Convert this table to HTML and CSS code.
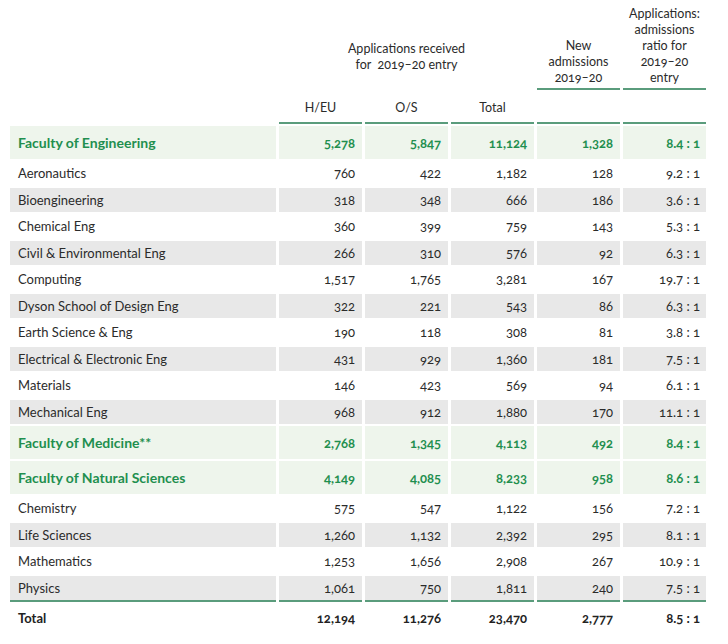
FILE: index.html
```html
<!DOCTYPE html>
<html>
<head>
<meta charset="utf-8">
<link rel="stylesheet" href="styles.css">
</head>
<body>
<div class="wrap">
<table class="stats">
  <colgroup>
    <col class="c-label"><col class="c-num"><col class="c-num"><col class="c-num"><col class="c-num"><col class="c-num">
  </colgroup>
  <thead>
    <tr class="h1">
      <th></th>
      <th colspan="3" class="grp"><span class="grp-text">Applications received<br>for&nbsp; 2019–20 entry</span></th>
      <th class="line">New<br>admissions<br>2019–20</th>
      <th class="line">Applications:<br>admissions<br>ratio for<br>2019–20<br>entry</th>
    </tr>
    <tr class="h2">
      <th></th>
      <th class="line">H/EU</th>
      <th class="line">O/S</th>
      <th class="line">Total</th>
      <th class="line"></th>
      <th class="line"></th>
    </tr>
  </thead>
  <tbody>
    <tr class="fac"><td>Faculty of Engineering</td><td>5,278</td><td>5,847</td><td>11,124</td><td>1,328</td><td class="ratio">8.4 : 1</td></tr>
    <tr><td>Aeronautics</td><td>760</td><td>422</td><td>1,182</td><td>128</td><td class="ratio">9.2 : 1</td></tr>
    <tr class="alt"><td>Bioengineering</td><td>318</td><td>348</td><td>666</td><td>186</td><td class="ratio">3.6 : 1</td></tr>
    <tr><td>Chemical Eng</td><td>360</td><td>399</td><td>759</td><td>143</td><td class="ratio">5.3 : 1</td></tr>
    <tr class="alt"><td>Civil &amp; Environmental Eng</td><td>266</td><td>310</td><td>576</td><td>92</td><td class="ratio">6.3 : 1</td></tr>
    <tr><td>Computing</td><td>1,517</td><td>1,765</td><td>3,281</td><td>167</td><td class="ratio">19.7 : 1</td></tr>
    <tr class="alt"><td>Dyson School of Design Eng</td><td>322</td><td>221</td><td>543</td><td>86</td><td class="ratio">6.3 : 1</td></tr>
    <tr><td>Earth Science &amp; Eng</td><td>190</td><td>118</td><td>308</td><td>81</td><td class="ratio">3.8 : 1</td></tr>
    <tr class="alt"><td>Electrical &amp; Electronic Eng</td><td>431</td><td>929</td><td>1,360</td><td>181</td><td class="ratio">7.5 : 1</td></tr>
    <tr><td>Materials</td><td>146</td><td>423</td><td>569</td><td>94</td><td class="ratio">6.1 : 1</td></tr>
    <tr class="alt"><td>Mechanical Eng</td><td>968</td><td>912</td><td>1,880</td><td>170</td><td class="ratio">11.1 : 1</td></tr>
    <tr class="fac"><td>Faculty of Medicine**</td><td>2,768</td><td>1,345</td><td>4,113</td><td>492</td><td class="ratio">8.4 : 1</td></tr>
    <tr class="fac"><td>Faculty of Natural Sciences</td><td>4,149</td><td>4,085</td><td>8,233</td><td>958</td><td class="ratio">8.6 : 1</td></tr>
    <tr><td>Chemistry</td><td>575</td><td>547</td><td>1,122</td><td>156</td><td class="ratio">7.2 : 1</td></tr>
    <tr class="alt"><td>Life Sciences</td><td>1,260</td><td>1,132</td><td>2,392</td><td>295</td><td class="ratio">8.1 : 1</td></tr>
    <tr><td>Mathematics</td><td>1,253</td><td>1,656</td><td>2,908</td><td>267</td><td class="ratio">10.9 : 1</td></tr>
    <tr class="alt last"><td>Physics</td><td>1,061</td><td>750</td><td>1,811</td><td>240</td><td class="ratio">7.5 : 1</td></tr>
  </tbody>
  <tfoot>
    <tr class="total"><td>Total</td><td>12,194</td><td>11,276</td><td>23,470</td><td>2,777</td><td class="ratio">8.5 : 1</td></tr>
  </tfoot>
</table>
</div>
</body>
</html>
```

FILE: styles.css
```css
html, body {
  margin: 0;
  padding: 0;
  background: #ffffff;
}
body {
  font-family: "Lato", "Open Sans", sans-serif;
  color: #2b2b2b;
}
.wrap {
  padding-left: 7px;
  padding-top: 0;
}
.stats {
  border-collapse: separate;
  border-spacing: 3px 2px;
  font-size: 13px;
  font-variant-numeric: oldstyle-nums;
  margin-top: -2px;
}
.c-label { width: 266px; }
.c-num { width: 83px; }

thead th {
  font-weight: normal;
  font-size: 12.5px;
  line-height: 16px;
  color: #2b2b2b;
  text-align: center;
  padding: 0;
  vertical-align: bottom;
}
.h1 th { height: 73px; padding-bottom: 2px; }
.h1 .grp { vertical-align: bottom; padding-bottom: 17px; }
.h2 th { height: 24px; padding-bottom: 6px; }
.line { border-bottom: 2px solid #5a9c7c; }

tbody td, tfoot td {
  padding: 0 7px 0 8px;
  height: 24.5px;
  text-align: right;
  vertical-align: middle;
}
tbody td:first-child, tfoot td:first-child {
  text-align: left;
}
tbody td:last-child, tfoot td:last-child { padding-right: 6px; }

.alt td { background: #e8e8e8; }
.fac td {
  background: #eef5ec;
  color: #1f8f4f;
  font-weight: bold;
  height: 33px;
}
.fac td:first-child { font-size: 14px; }
.last td { border-bottom: 2px solid #5a9c7c; }
.total td {
  font-weight: bold;
  height: 28px;
  color: #222;
}
```
